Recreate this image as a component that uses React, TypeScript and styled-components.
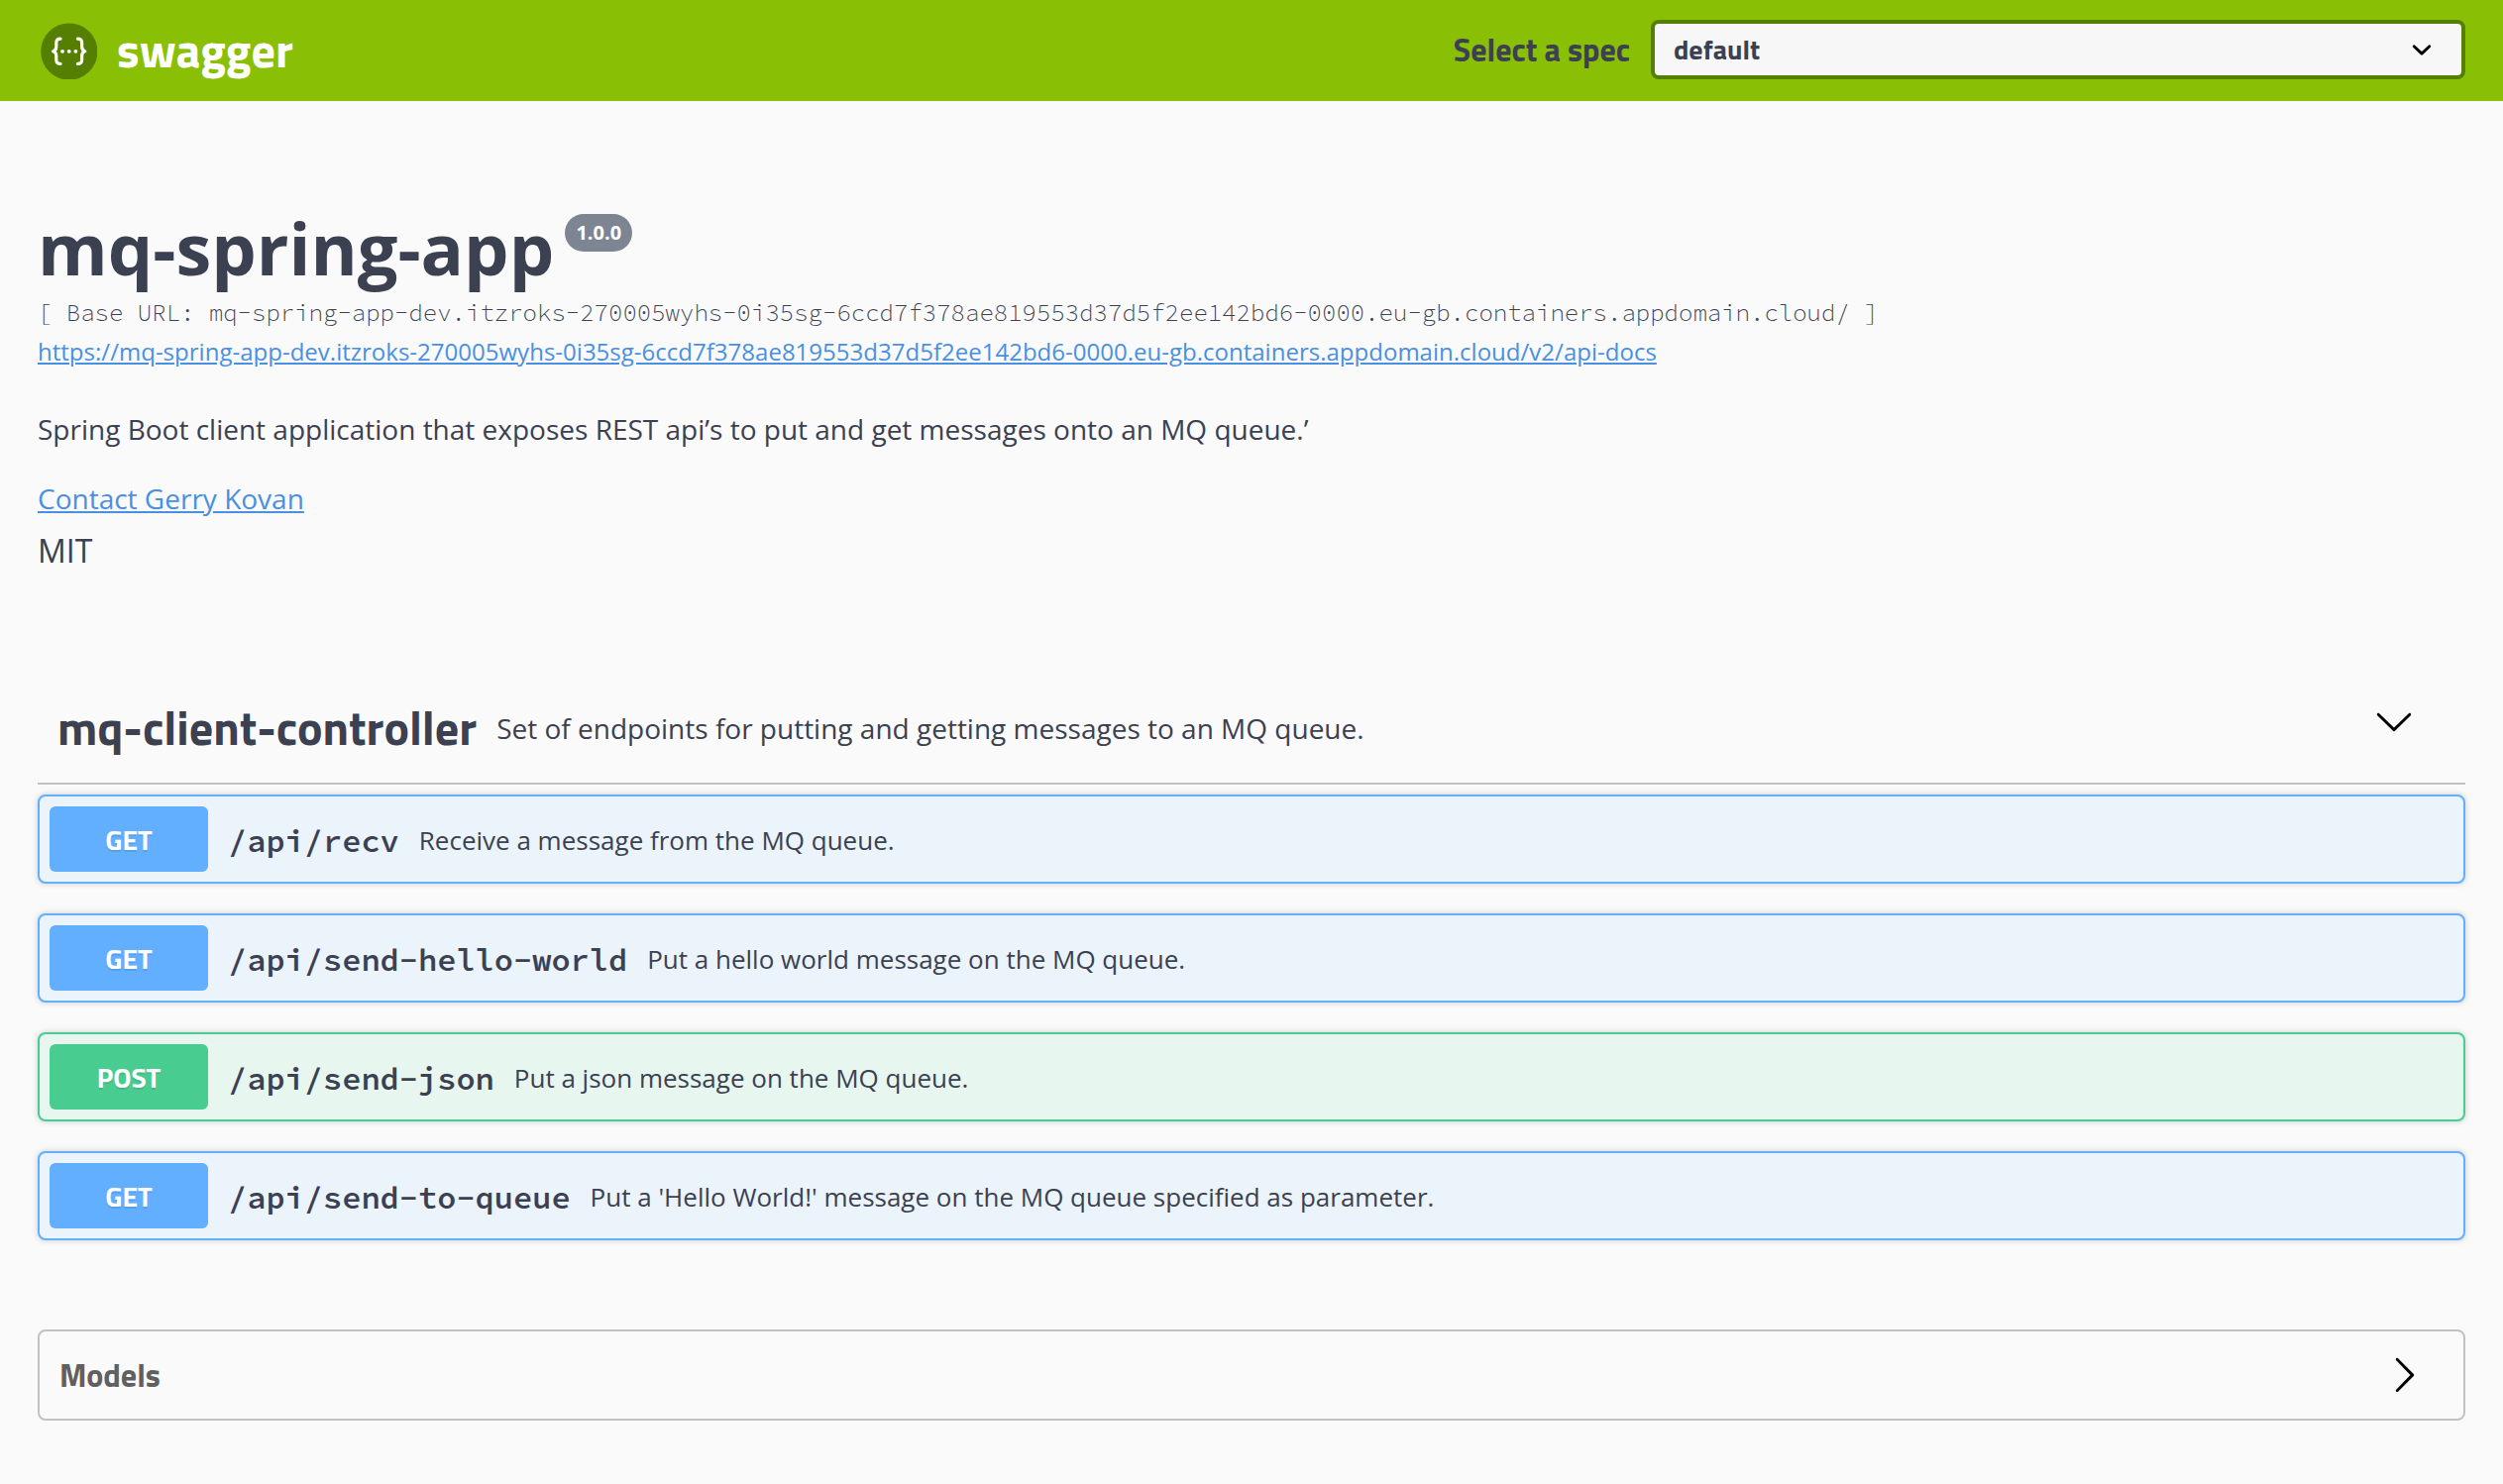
import React from "react";
import styled, { createGlobalStyle } from "styled-components";

const sans = '"Open Sans", "Noto Sans", sans-serif';
const heading = '"Titillium Web", "Open Sans", sans-serif';
const mono = '"Source Code Pro", "Liberation Mono", monospace';
const ink = "#3b4151";

const GlobalStyle = createGlobalStyle`
  *, *::before, *::after { box-sizing: border-box; }
  body {
    margin: 0;
    background: #fafafa;
    color: ${ink};
    font-family: ${sans};
  }
  h1, h2, h3, p { margin: 0; }
`;

type Method = "GET" | "POST";

const methodColors: Record<Method, { solid: string; tint: string }> = {
  GET: { solid: "#61affe", tint: "#ebf3fb" },
  POST: { solid: "#49cc90", tint: "#e8f6f0" },
};

const Topbar = styled.header`
  display: flex;
  align-items: center;
  justify-content: space-between;
  height: 102px;
  padding: 0 38px;
  background: #89bf04;
`;

const Brand = styled.a`
  display: flex;
  align-items: center;
  gap: 20px;
  color: #fff;
  font: 700 48px/72px ${heading};
`;

const Logo = styled.svg`
  display: block;
  width: 60px;
  height: 60px;
  margin-top: -2px;
`;

const SpecPicker = styled.div`
  display: flex;
  align-items: center;
  gap: 21px;
  margin-bottom: 2px;
`;

const SpecLabel = styled.span`
  font: 700 32px/48px ${heading};
`;

const SelectBox = styled.div`
  display: flex;
  align-items: center;
  justify-content: space-between;
  width: 822px;
  height: 60px;
  padding: 0 20px 0 19px;
  border: 4px solid #547f00;
  border-radius: 8px;
  background: #f7f7f7;
  font: 700 28px/40px ${heading};
`;

const Icon = styled.svg`
  display: block;
  flex: none;
  width: 40px;
  height: 40px;
  fill: #000;
`;

const Page = styled.main`
  padding: 99px 38px 64px;
`;

const Info = styled.section`
  display: flex;
  flex-direction: column;
  align-items: flex-start;
`;

const TitleRow = styled.div`
  display: flex;
  align-items: flex-start;
  gap: 11px;
`;

const Title = styled.h1`
  font: 700 72px/98px ${sans};
`;

const Version = styled.span`
  display: flex;
  align-items: center;
  justify-content: center;
  width: 68px;
  height: 38px;
  margin-top: 15px;
  border-radius: 19px;
  background: #7d8492;
  color: #fff;
  font: 700 20px/30px ${sans};
`;

const BaseUrl = styled.pre`
  margin: 0;
  font: 340 24px/33px ${mono};
`;

const DocsLink = styled.a`
  margin-top: 5px;
  color: #4990e2;
  font: 400 24px/36px ${sans};
  letter-spacing: 0.012px;
  text-decoration: underline;
`;

const Description = styled.p`
  margin-top: 39px;
  font: 400 28px/42px ${sans};
`;

const ContactLink = styled.a`
  margin-top: 28px;
  color: #4990e2;
  font: 400 28px/42px ${sans};
  text-decoration: underline;
`;

const License = styled.p`
  margin-top: 8px;
  font: 400 32px/48px ${sans};
`;

const TagHeader = styled.div`
  display: flex;
  align-items: center;
  gap: 20px;
  height: 113px;
  margin-top: 99px;
  padding: 0 52px 0 20px;
  border-bottom: 2px solid rgba(59, 65, 81, 0.3);
`;

const TagName = styled.h2`
  font: 700 48px/72px ${heading};
`;

const TagDescription = styled.p`
  flex: 1;
  font: 400 28px/42px ${sans};
`;

const TagToggle = styled.span`
  padding-bottom: 13px;
`;

const Operations = styled.div`
  display: flex;
  flex-direction: column;
  gap: 30px;
  margin-top: 10px;
`;

const OperationRow = styled.div<{ $method: Method }>`
  display: flex;
  align-items: center;
  gap: 20px;
  height: 90px;
  padding: 0 10px;
  border: 2px solid ${(p) => methodColors[p.$method].solid};
  border-radius: 8px;
  background: ${(p) => methodColors[p.$method].tint};
  box-shadow: 0 0 6px rgba(0, 0, 0, 0.19);
`;

const MethodBadge = styled.span<{ $method: Method }>`
  width: 160px;
  height: 66px;
  border-radius: 6px;
  background: ${(p) => methodColors[p.$method].solid};
  color: #fff;
  font: 700 28px/67px ${heading};
  text-align: center;
  text-shadow: 0 2px 0 rgba(0, 0, 0, 0.1);
`;

const Path = styled.span`
  padding-top: 4px;
  font: 600 32px/44px ${mono};
`;

const Summary = styled.span`
  padding-top: 2px;
  font: 400 26px/36px ${sans};
`;

const Models = styled.section`
  display: flex;
  align-items: center;
  justify-content: space-between;
  height: 92px;
  margin-top: 90px;
  padding: 0 40px 0 20px;
  border: 2px solid rgba(59, 65, 81, 0.3);
  border-radius: 8px;
`;

const ModelsTitle = styled.h3`
  color: #606060;
  font: 700 32px/48px ${heading};
`;

const operations: { method: Method; path: string; summary: string }[] = [
  { method: "GET", path: "/api/recv", summary: "Receive a message from the MQ queue." },
  { method: "GET", path: "/api/send-hello-world", summary: "Put a hello world message on the MQ queue." },
  { method: "POST", path: "/api/send-json", summary: "Put a json message on the MQ queue." },
  {
    method: "GET",
    path: "/api/send-to-queue",
    summary: "Put a 'Hello World!' message on the MQ queue specified as parameter.",
  },
];

const host = "mq-spring-app-dev.itzroks-270005wyhs-0i35sg-6ccd7f378ae819553d37d5f2ee142bd6-0000.eu-gb.containers.appdomain.cloud";

const SwaggerLogo = () => (
  <Logo viewBox="0 0 60 60" aria-hidden="true">
    <circle cx="31.8" cy="32" r="28.6" fill="#547f00" />
    <g fill="none" stroke="#fff" strokeWidth="3.2" strokeLinecap="round" strokeLinejoin="round">
      <path d="M23 19.200c-3.200 0-4.200 1-4.200 4.200v3.400c0 3-1 4.500-3.200 5 2.200.5 3.200 2.200 3.200 5v3.400c0 3.200 1 4.200 4.200 4.200" />
      <path d="M40.400 19.200c3.200 0 4.200 1 4.200 4.200v3.400c0 3 1 4.500 3.200 5-2.200.5-3.200 2.200-3.200 5v3.400c0 3.200-1 4.200-4.200 4.200" />
    </g>
    <g fill="#fff">
      <circle cx="25" cy="31.800" r="1.900" />
      <circle cx="31.700" cy="31.800" r="1.900" />
      <circle cx="38.400" cy="31.800" r="1.900" />
    </g>
  </Logo>
);

const SelectArrow = () => (
  <Icon viewBox="0 0 20 20" aria-hidden="true">
    <path d="M13.418 7.859a.695.695 0 0 1 .978 0 .68.68 0 0 1 0 .969l-3.908 3.830a.697.697 0 0 1-.979 0l-3.908-3.830a.68.68 0 0 1 0-.969.695.695 0 0 1 .978 0L10 11z" />
  </Icon>
);

const ArrowDown = () => (
  <Icon viewBox="0 0 20 20" aria-hidden="true">
    <path d="M17.418 6.109c.272-.268.709-.268.979 0s.271.701 0 .969l-7.908 7.830c-.27.268-.707.268-.979 0l-7.908-7.830c-.27-.268-.27-.701 0-.969.271-.268.709-.268.979 0L10 13.250z" />
  </Icon>
);

const ArrowRight = () => (
  <Icon viewBox="0 0 20 20" aria-hidden="true">
    <path d="M13.250 10L6.109 2.580c-.268-.27-.268-.707 0-.979.268-.27.701-.27.969 0l7.830 7.908c.268.271.268.709 0 .979l-7.830 7.908c-.268.271-.701.271-.969 0-.268-.271-.268-.707 0-.979z" />
  </Icon>
);

export default function App() {
  return (
    <>
      <GlobalStyle />
      <Topbar>
        <Brand>
          <SwaggerLogo />
          <span>swagger</span>
        </Brand>
        <SpecPicker>
          <SpecLabel>Select a spec</SpecLabel>
          <SelectBox>
            <span>default</span>
            <SelectArrow />
          </SelectBox>
        </SpecPicker>
      </Topbar>
      <Page>
        <Info>
          <TitleRow>
            <Title>mq-spring-app</Title>
            <Version>1.0.0</Version>
          </TitleRow>
          <BaseUrl>{`[ Base URL: ${host}/ ]`}</BaseUrl>
          <DocsLink>{`https://${host}/v2/api-docs`}</DocsLink>
          <Description>
            Spring Boot client application that exposes REST api’s to put and get messages onto an MQ queue.’
          </Description>
          <ContactLink>Contact Gerry Kovan</ContactLink>
          <License>MIT</License>
        </Info>
        <TagHeader>
          <TagName>mq-client-controller</TagName>
          <TagDescription>Set of endpoints for putting and getting messages to an MQ queue.</TagDescription>
          <TagToggle>
            <ArrowDown />
          </TagToggle>
        </TagHeader>
        <Operations>
          {operations.map((op) => (
            <OperationRow key={op.path} $method={op.method}>
              <MethodBadge $method={op.method}>{op.method}</MethodBadge>
              <Path>{op.path}</Path>
              <Summary>{op.summary}</Summary>
            </OperationRow>
          ))}
        </Operations>
        <Models>
          <ModelsTitle>Models</ModelsTitle>
          <ArrowRight />
        </Models>
      </Page>
    </>
  );
}
